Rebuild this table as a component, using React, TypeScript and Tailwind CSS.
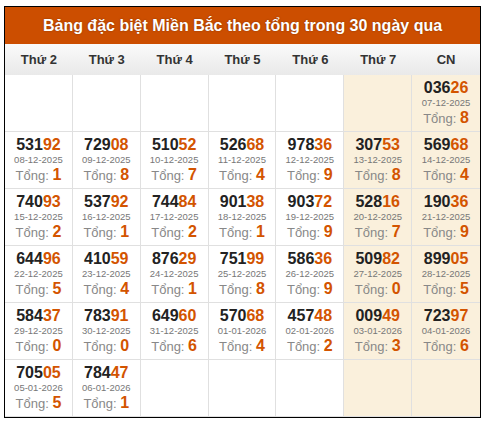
import React from "react";

type Cell = { n: string; d: string } | null;

const rows: Cell[][] = [
  [null, null, null, null, null, null, { n: "03626", d: "07-12-2025" }],
  [
    { n: "53192", d: "08-12-2025" },
    { n: "72908", d: "09-12-2025" },
    { n: "51052", d: "10-12-2025" },
    { n: "52668", d: "11-12-2025" },
    { n: "97836", d: "12-12-2025" },
    { n: "30753", d: "13-12-2025" },
    { n: "56968", d: "14-12-2025" },
  ],
  [
    { n: "74093", d: "15-12-2025" },
    { n: "53792", d: "16-12-2025" },
    { n: "74484", d: "17-12-2025" },
    { n: "90138", d: "18-12-2025" },
    { n: "90372", d: "19-12-2025" },
    { n: "52816", d: "20-12-2025" },
    { n: "19036", d: "21-12-2025" },
  ],
  [
    { n: "64496", d: "22-12-2025" },
    { n: "41059", d: "23-12-2025" },
    { n: "87629", d: "24-12-2025" },
    { n: "75199", d: "25-12-2025" },
    { n: "58636", d: "26-12-2025" },
    { n: "50982", d: "27-12-2025" },
    { n: "89905", d: "28-12-2025" },
  ],
  [
    { n: "58437", d: "29-12-2025" },
    { n: "78391", d: "30-12-2025" },
    { n: "64960", d: "31-12-2025" },
    { n: "57068", d: "01-01-2026" },
    { n: "45748", d: "02-01-2026" },
    { n: "00949", d: "03-01-2026" },
    { n: "72397", d: "04-01-2026" },
  ],
  [
    { n: "70505", d: "05-01-2026" },
    { n: "78447", d: "06-01-2026" },
    null,
    null,
    null,
    null,
    null,
  ],
];

const days = ["Thứ 2", "Thứ 3", "Thứ 4", "Thứ 5", "Thứ 6", "Thứ 7", "CN"];

function total(n: string) {
  return (Number(n[3]) + Number(n[4])) % 10;
}

export default function App() {
  return (
    <div
      className="ml-[4px] mt-[6px] w-[477px] border border-black bg-white"
      style={{ fontFamily: '"Liberation Sans", Arial, sans-serif' }}
    >
      <div className="flex h-[37px] items-center justify-center bg-[#cc4e00] text-[16px] font-bold text-white [text-shadow:0_0_2px_rgba(0,0,0,0.35)]">
        Bảng đặc biệt Miền Bắc theo tổng trong 30 ngày qua
      </div>
      <div className="grid h-[31px] grid-cols-7 bg-gradient-to-b from-[#fafafa] to-[#e9e9e9]">
        {days.map((d) => (
          <div
            key={d}
            className="flex items-center justify-center text-[13px] font-bold text-[#333]"
          >
            {d}
          </div>
        ))}
      </div>
      <div className="grid grid-cols-7">
        {rows.flatMap((r, ri) =>
          r.map((c, ci) => (
            <div
              key={`${ri}-${ci}`}
              className={`flex h-[57px] flex-col items-center border-b border-r border-[#e0e0e0] pt-[4px] last:border-r-0 ${
                ci >= 5 ? "bg-[#faf0dc]" : "bg-white"
              } ${ci === 6 ? "border-r-0" : ""}`}
            >
              {c && (
                <>
                  <div className="h-[18px] text-[16px] font-bold leading-[18px] text-[#222]">
                    {c.n.slice(0, 3)}
                    <span className="text-[#d35400]">{c.n.slice(3)}</span>
                  </div>
                  <div className="h-[12px] text-[9.5px] leading-[12px] text-[#777]">
                    {c.d}
                  </div>
                  <div className="h-[17px] text-[13px] leading-[17px] text-[#888]">
                    Tổng:{" "}
                    <span className="text-[16px] font-bold text-[#d35400]">
                      {total(c.n)}
                    </span>
                  </div>
                </>
              )}
            </div>
          ))
        )}
      </div>
    </div>
  );
}
